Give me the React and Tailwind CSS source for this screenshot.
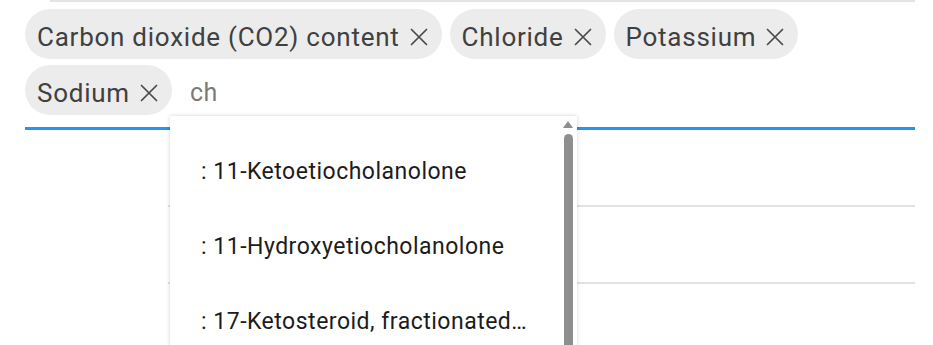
import React from 'react';

const chips = ['Carbon dioxide (CO2) content', 'Chloride', 'Potassium', 'Sodium'];
const options = [': 11-Ketoetiocholanolone', ': 11-Hydroxyetiocholanolone', ': 17-Ketosteroid, fractionated…'];

const CloseIcon = () => (
    <svg width="20" height="20" viewBox="0 0 20 20" className="shrink-0">
        <path d="M2.5 2.5 L17.5 17.5 M17.5 2.5 L2.5 17.5" stroke="#4a4a4a" strokeWidth="1.7" strokeLinecap="round" />
    </svg>
);

const Chip = ({ label }) => (
    <div className="flex items-center gap-[9px] h-[50px] pt-[6px] pl-[12px] pr-[13px] rounded-full bg-[#ececec] text-[#404040] text-[26px] tracking-[0.75px]">
        <span>{label}</span>
        <CloseIcon />
    </div>
);

export default function App() {
    return (
        <div className="relative w-[933px] h-[345px] overflow-hidden bg-white font-['Roboto',sans-serif]">
            <div className="ml-[50px] mr-[18px] border-t-2 border-[#e4e4e4]" />

            <div className="ml-[25px] mr-[18px] pt-[7px] border-b-[3px] border-[#2196f3] pb-[12px]">
                <div className="flex flex-wrap gap-x-[8px] gap-y-[6px] items-center">
                    {chips.map((c) => (
                        <Chip key={c} label={c} />
                    ))}
                    <div className="pl-[10px] pt-[6px] text-[25px] tracking-[0.5px] text-[#7a7a7a]">ch</div>
                </div>
            </div>

            {/* rows behind the menu */}
            <div className="ml-[168px] mr-[18px]">
                <div className="h-[77px] border-b-2 border-[#e2e2e2]" />
                <div className="h-[77px] border-b-2 border-[#e2e2e2]" />
            </div>

            {/* options menu */}
            <div className="absolute left-[170px] top-[116px] w-[407px] h-[240px] bg-white shadow-[0_0_4px_rgba(0,0,0,0.18)] flex">
                <div className="flex-1 pt-[19px]">
                    {options.map((o) => (
                        <div key={o} className="h-[75px] flex items-center pl-[31px] text-[23px] tracking-[0.5px] text-[#1c1c1c]">
                            {o}
                        </div>
                    ))}
                </div>
                <div className="w-[14px] flex flex-col items-center pt-[5px] mr-[2px]">
                    <svg width="10" height="7" viewBox="0 0 10 7">
                        <path d="M0 7 L5 0 L10 7 Z" fill="#8e8e8e" />
                    </svg>
                    <div className="mt-[6px] w-[9px] flex-1 rounded-t-full bg-[#8e8e8e]" />
                </div>
            </div>
        </div>
    );
}
